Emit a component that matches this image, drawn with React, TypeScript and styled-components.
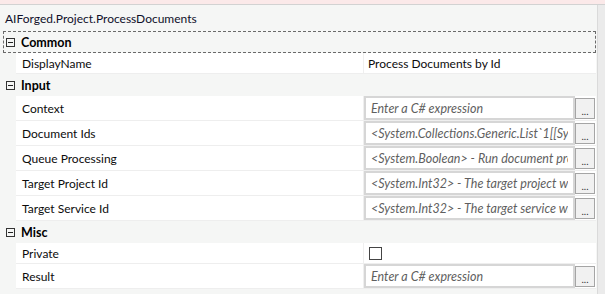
import React from 'react'
import styled, { createGlobalStyle } from 'styled-components'

const GlobalStyle = createGlobalStyle`
  html, body {
    margin: 0;
    padding: 0;
    background: #f5f6f5;
    font-family: Lato, "Noto Sans", sans-serif;
    font-size: 12px;
    color: #0c0c0c;
  }
`

type Prop = {
  label: string
  kind: 'text' | 'expr' | 'check'
  value?: string
}

type Category = {
  name: string
  focused?: boolean
  props: Prop[]
}

const categories: Category[] = [
  {
    name: 'Common',
    focused: true,
    props: [{ label: 'DisplayName', kind: 'text', value: 'Process Documents by Id' }],
  },
  {
    name: 'Input',
    props: [
      { label: 'Context', kind: 'expr', value: 'Enter a C# expression' },
      { label: 'Document Ids', kind: 'expr', value: '<System.Collections.Generic.List`1[[System.Int32, System.Private.CoreLib]]>' },
      { label: 'Queue Processing', kind: 'expr', value: '<System.Boolean> - Run document processing in a queue' },
      { label: 'Target Project Id', kind: 'expr', value: '<System.Int32> - The target project which the documents belong to' },
      { label: 'Target Service Id', kind: 'expr', value: '<System.Int32> - The target service which processes the documents' },
    ],
  },
  {
    name: 'Misc',
    props: [
      { label: 'Private', kind: 'check' },
      { label: 'Result', kind: 'expr', value: 'Enter a C# expression' },
    ],
  },
]

const App = () => {
  return (
    <>
      <GlobalStyle />
      <TopStrip />
      <Body>
        <Grid>
          <Title>AIForged.Project.ProcessDocuments</Title>
          {categories.map((cat) => (
            <div key={cat.name}>
              <CatRow $focused={cat.focused}>
                <Toggle />
                <CatName>{cat.name}</CatName>
              </CatRow>
              {cat.props.map((p) => (
                <PropRow key={p.label} $tall={p.kind === 'expr'}>
                  <Label>{p.label}</Label>
                  <Value>
                    {p.kind === 'text' && <PlainValue>{p.value}</PlainValue>}
                    {p.kind === 'check' && <Check />}
                    {p.kind === 'expr' && (
                      <>
                        <ExprBox>
                          <ExprText>{p.value}</ExprText>
                        </ExprBox>
                        <DotsButton>...</DotsButton>
                      </>
                    )}
                  </Value>
                </PropRow>
              ))}
            </div>
          ))}
        </Grid>
        <Scrollbar />
      </Body>
    </>
  )
}

export default App

const TopStrip = styled.div`
  height: 4px;
  background: #fbe9e9;
  border-bottom: 1px solid #d2d2d2;
`
const Body = styled.div`
  display: flex;
  height: 289px;
`
const Grid = styled.div`
  flex: 1;
  padding-right: 1px;
`
const Scrollbar = styled.div`
  width: 7px;
  border-left: 1px solid #dadada;
  background: #ebebeb;
`
const Title = styled.div`
  height: 26px;
  display: flex;
  align-items: center;
  padding-left: 5px;
  font-size: 12px;
  color: #10102a;
`
const CatRow = styled.div<{ $focused?: boolean }>`
  height: 22px;
  display: flex;
  align-items: center;
  margin-left: 3px;
  padding-left: 2px;
  box-sizing: border-box;
  border: 1px dashed ${(p) => (p.$focused ? '#6a6a6a' : 'transparent')};
`
const Toggle = styled.span`
  position: relative;
  width: 9px;
  height: 9px;
  box-sizing: border-box;
  border: 1px solid #333;
  margin-right: 6px;
  &::after {
    content: '';
    position: absolute;
    left: 1px;
    right: 1px;
    top: 3px;
    height: 1px;
    background: #222;
  }
`
const CatName = styled.span`
  font-weight: 700;
  font-size: 12.5px;
  color: #000;
`
const PropRow = styled.div<{ $tall?: boolean }>`
  display: flex;
  height: ${(p) => (p.$tall ? '25px' : '21px')};
  margin-left: 16px;
  background: #fff;
  box-sizing: border-box;
  border-bottom: 1px solid #eeeeee;
`
const Label = styled.div`
  width: 348px;
  display: flex;
  align-items: center;
  padding-left: 6px;
  box-sizing: border-box;
  border-right: 1px solid #efefef;
`
const Value = styled.div`
  flex: 1;
  display: flex;
  align-items: center;
  min-width: 0;
`
const PlainValue = styled.span`
  padding-left: 4px;
`
const Check = styled.span`
  width: 13px;
  height: 13px;
  box-sizing: border-box;
  border: 1px solid #444;
  margin-left: 5px;
  background: #fff;
`
const ExprBox = styled.div`
  width: 211px;
  height: 24px;
  box-sizing: border-box;
  border: 2px solid #d6d6d6;
  padding: 0 5px;
  display: flex;
  align-items: center;
  overflow: hidden;
`
const ExprText = styled.span`
  display: block;
  width: 100%;
  overflow: hidden;
  white-space: nowrap;
  font-style: italic;
  font-size: 12.5px;
  color: #5f5f5f;
`
const DotsButton = styled.div`
  width: 20px;
  height: 21px;
  box-sizing: border-box;
  border: 1px solid #a5a5a5;
  background: #f1f1f1;
  display: flex;
  align-items: flex-end;
  justify-content: center;
  font-size: 10px;
  line-height: 14px;
  color: #333;
`
